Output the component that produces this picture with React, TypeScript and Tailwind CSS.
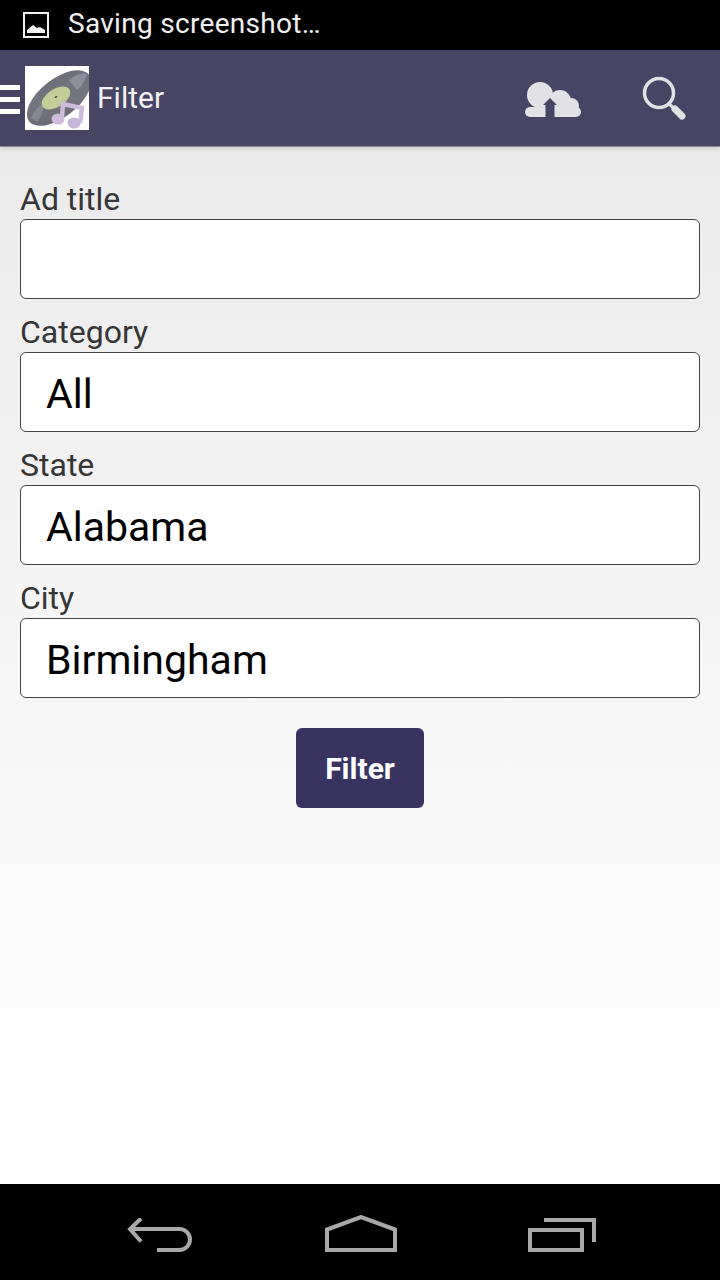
const fields = [
  { label: "Ad title", value: "" },
  { label: "Category", value: "All" },
  { label: "State", value: "Alabama" },
  { label: "City", value: "Birmingham" },
]

function RecordLogo() {
  return (
    <svg width="64" height="64" viewBox="0 0 64 64" className="bg-white shrink-0">
      <defs>
        <linearGradient id="disc" x1="0" y1="1" x2="1" y2="0">
          <stop offset="0" stopColor="#63646e" />
          <stop offset="0.45" stopColor="#74757f" />
          <stop offset="1" stopColor="#6b6c78" />
        </linearGradient>
      </defs>
      <ellipse cx="34" cy="32" rx="38" ry="19" transform="rotate(-38 34 32)" fill="url(#disc)" />
      <path d="M44 14 Q54 6 62 8 Q58 20 52 24 Z" fill="#a3a4b0" opacity="0.6" />
      <path d="M6 52 Q10 42 18 38 Q20 46 12 56 Z" fill="#9a9ba6" opacity="0.55" />
      <ellipse cx="31" cy="32" rx="16" ry="9" transform="rotate(-33 31 32)" fill="#c4cc9a" />
      <ellipse cx="31" cy="31" rx="1.5" ry="0.8" transform="rotate(-33 31 31)" fill="#444" />
      <path d="M37 52 L38 38 L57 42 L55 57" fill="none" stroke="#ccbbdb" strokeWidth="4.5" />
      <ellipse cx="33" cy="53" rx="6.5" ry="5.5" fill="#ccbbdb" />
      <ellipse cx="49" cy="57" rx="6.5" ry="5.5" fill="#c6b5d6" />
    </svg>
  )
}

function CloudUpload() {
  return (
    <svg width="56" height="36" viewBox="0 0 56 36">
      <circle cx="15" cy="14" r="13" fill="#e2e1e6" />
      <circle cx="35" cy="20" r="11" fill="#e2e1e6" />
      <circle cx="46" cy="25" r="8" fill="#e2e1e6" />
      <rect x="0" y="26" width="56" height="10" rx="5" fill="#e2e1e6" />
      <path d="M25 17 L32 24 L29.5 24 L29.5 36 L20.5 36 L20.5 24 L18 24 Z" fill="#474464" />
    </svg>
  )
}

function SearchIcon() {
  return (
    <svg width="46" height="46" viewBox="0 0 46 46">
      <circle cx="17" cy="17" r="14.5" fill="none" stroke="#e2e1e6" strokeWidth="3.5" />
      <line x1="27" y1="28" x2="33" y2="33" stroke="#e2e1e6" strokeWidth="3" />
      <line x1="33" y1="33" x2="40" y2="40" stroke="#e2e1e6" strokeWidth="7" strokeLinecap="round" />
    </svg>
  )
}

export default function App() {
  return (
    <div className="flex h-[1280px] w-[720px] flex-col overflow-hidden font-['Roboto',sans-serif]">
      <div className="flex h-[50px] items-center bg-black pl-[23px] text-white">
        <svg width="26" height="26" viewBox="0 0 26 26">
          <rect x="1" y="1" width="24" height="24" fill="none" stroke="#f2f2f2" strokeWidth="2" />
          <path d="M4 21 L4 18 L10 13 L14 16 L17 15 L22 18 L22 21 Z" fill="#f2f2f2" />
        </svg>
        <span className="mb-[2px] ml-[19px] text-[28px] leading-none tracking-[0.3px] text-[#f0f0f0]">Saving screenshot…</span>
      </div>

      <div className="z-10 flex h-[97px] items-center justify-between border-b border-[#8a889c] bg-[#474464] shadow-[0_2px_4px_rgba(0,0,0,0.12)]">
        <div className="flex items-center">
          <div className="mt-[3px] flex w-[25px] flex-col gap-[6.5px]">
            <div className="h-[5.5px] w-[20px] bg-white" />
            <div className="h-[5.5px] w-[20px] bg-white" />
            <div className="h-[5.5px] w-[20px] bg-white" />
          </div>
          <RecordLogo />
          <span className="ml-2 text-[30px] leading-none text-[#f2f2f4]">Filter</span>
        </div>
        <div className="flex items-center">
          <div className="mt-[1px]">
            <CloudUpload />
          </div>
          <div className="ml-[61px] mr-[32px] mt-[2px]">
            <SearchIcon />
          </div>
        </div>
      </div>

      <div className="flex flex-1 flex-col bg-gradient-to-b from-[#ebebeb] from-0% to-white to-95% px-5 pt-[35px]">
        {fields.map((f) => (
          <div key={f.label} className="flex flex-col">
            <label className="h-[37px] text-[32px] leading-[35px] text-[#363636]">{f.label}</label>
            <div className="flex h-[80px] items-center rounded-[6px] border border-[#444] bg-white pl-[25px] pt-[6px] text-[41px] text-black">
              {f.value}
            </div>
            <div className="h-4" />
          </div>
        ))}
        <button className="mx-auto mt-[14px] h-[80px] w-[128px] rounded-[6px] bg-[#38335f] text-[30px] font-bold text-white">
          Filter
        </button>
      </div>

      <div className="flex h-[96px] items-end justify-between bg-black pb-[28px] pl-[127px] pr-[124px]">
        <svg width="66" height="34" viewBox="0 0 66 34" fill="none" stroke="#a8a8a8" strokeWidth="4">
          <path d="M14 0.5 L3 11 L14 23.5" />
          <path d="M3 11 H52.5 A10.5 10.5 0 0 1 52.5 32 H30" />
        </svg>
        <svg width="72" height="37" viewBox="0 0 72 37" fill="none" stroke="#a8a8a8" strokeWidth="4">
          <path d="M2 35 V14.5 L36 2 L70 14.5 V35 Z" />
        </svg>
        <svg width="68" height="34" viewBox="0 0 68 34" fill="none" stroke="#a8a8a8" strokeWidth="4">
          <rect x="2" y="12" width="52" height="20" />
          <path d="M16 2 H66 V24" />
        </svg>
      </div>
    </div>
  )
}
